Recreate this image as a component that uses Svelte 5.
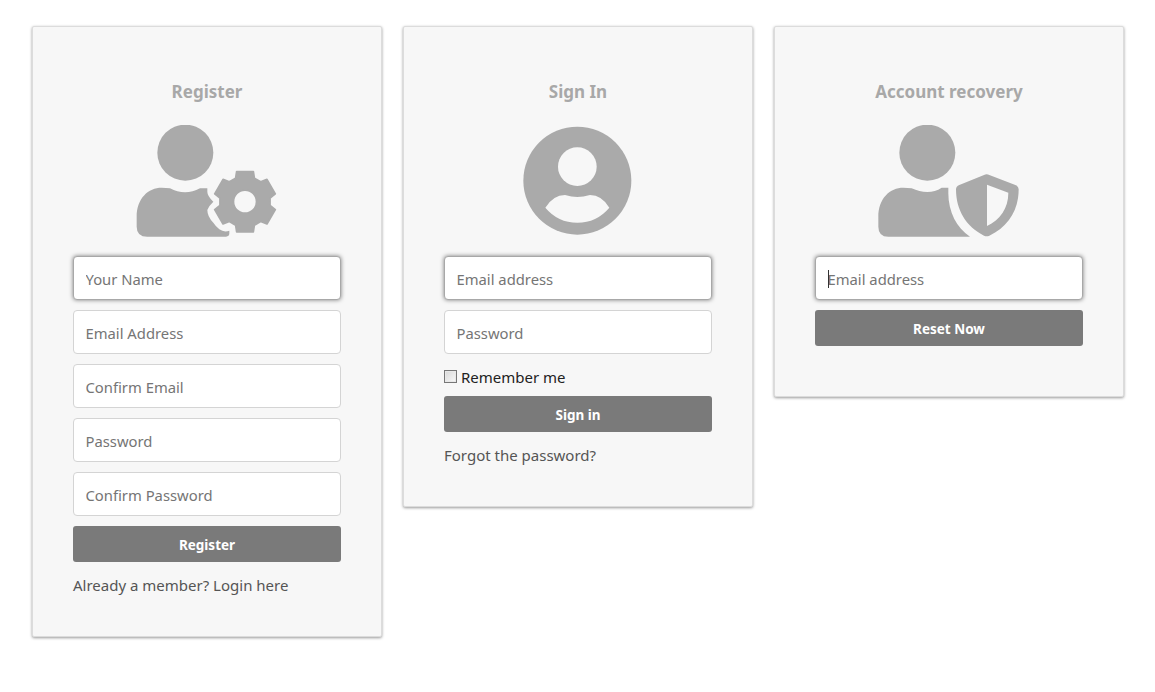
<script>
  const gear = (() => {
    const cx = 375, cy = 395, rOut = 94, rIn = 76;
    let d = '';
    for (let i = 0; i < 6; i++) {
      const a = (-90 + i * 60) * Math.PI / 180;
      const pt = (r, off) => `${(cx + r * Math.cos(a + off)).toFixed(1)} ${(cy + r * Math.sin(a + off)).toFixed(1)}`;
      d += `${i ? 'L' : 'M'}${pt(rIn, -0.38)} L${pt(rOut, -0.27)} L${pt(rOut, 0.27)} L${pt(rIn, 0.38)} `;
    }
    return d + 'Z M340.5 395 a34.5 34.5 0 1 0 69 0 a34.5 34.5 0 1 0 -69 0 Z';
  })();
</script>

<div class="page">
  <section class="card">
    <h2>Register</h2>
    <svg class="icon" viewBox="-9 165 540 336" role="img" aria-label="Register">
      <circle cx="196" cy="248" r="84" />
      <path d="M82 500 H318 Q328 500 328 490 V482 Q312 488 298 478 Q288 470 280 458 Q262 440 262 420 Q266 408 280 395 Q262 378 262 365 V355 H240 Q218 367 195 367 Q172 367 150 355 Q138 353 125 353 C85 353 50 385 50 440 V470 Q50 500 82 500 Z" />
      <path class="gear" fill-rule="evenodd" d={gear} />
    </svg>
    <form class="form">
      <input class="focused" placeholder="Your Name" />
      <input placeholder="Email Address" />
      <input placeholder="Confirm Email" />
      <input placeholder="Password" />
      <input placeholder="Confirm Password" />
      <button type="button">Register</button>
    </form>
    <a href="#login">Already a member? Login here</a>
  </section>

  <section class="card">
    <h2>Sign In</h2>
    <svg class="icon" viewBox="-36 165 540 336" role="img" aria-label="Sign In">
      <circle cx="232" cy="332" r="162" />
      <circle class="cut" cx="232" cy="290" r="58" />
      <path class="cut" d="M136 413 Q160 375 195 375 Q215 381 232 381 Q250 381 270 375 Q305 375 328 413 Q290 458 232 458 Q174 458 136 413 Z" />
    </svg>
    <form class="form">
      <input class="focused" placeholder="Email address" />
      <input placeholder="Password" />
      <label class="remember"><input class="check" type="checkbox" /><span>Remember me</span></label>
      <button type="button">Sign in</button>
    </form>
    <a href="#forgot">Forgot the password?</a>
  </section>

  <section class="card">
    <h2>Account recovery</h2>
    <svg class="icon" viewBox="-3 165 540 336" role="img" aria-label="Account recovery">
      <circle cx="202" cy="248" r="84" />
      <path d="M85 500 H330 C290 475 265 425 265 370 V353 H245 Q225 366 202 366 Q178 366 155 355 Q142 353 130 353 C90 353 55 385 55 440 V470 Q55 500 85 500 Z" />
      <path fill-rule="evenodd" d="M372 315 Q380 311 388 315 L466 345 Q476 349 476 358 C476 420 445 470 388 497 Q380 501 372 497 C318 470 288 420 288 358 Q288 349 298 345 Z M381 344 V468 C420 450 445 415 445 368 Z" />
    </svg>
    <form class="form last">
      <div class="field">
        <input class="focused" placeholder="Email address" />
        <span class="caret"></span>
      </div>
      <button type="button">Reset Now</button>
    </form>
  </section>
</div>

<style>
  :global(body) {
    margin: 0;
    background: #fff;
    font-family: "Noto Sans", "Open Sans", sans-serif;
  }
  .page {
    display: flex;
    align-items: flex-start;
    gap: 21px;
    padding: 26px 31px 55px 32px;
  }
  .card {
    box-sizing: border-box;
    width: 350px;
    padding: 50px 40px 41px;
    background: #f7f7f7;
    border: 1px solid #dcdcdc;
    border-radius: 2px;
    box-shadow: 0 1px 3px rgba(0, 0, 0, 0.4);
  }
  h2 {
    margin: 0;
    height: 28px;
    line-height: 29px;
    text-align: center;
    font-size: 17px;
    font-weight: 700;
    color: #a8a8a8;
  }
  .icon {
    display: block;
    width: 180px;
    height: 112px;
    margin: 20px auto 19px;
    fill: #aaa;
  }
  .gear {
    stroke: #aaa;
    stroke-width: 5;
    stroke-linejoin: round;
  }
  .cut {
    fill: #f7f7f7;
  }
  .form {
    display: flex;
    flex-direction: column;
    gap: 10px;
  }
  .form.last {
    padding-bottom: 9px;
  }
  .field {
    position: relative;
    display: flex;
  }
  input:not(.check) {
    box-sizing: border-box;
    width: 100%;
    height: 44px;
    padding: 2px 11.5px 0;
    background: #fff;
    border: 1px solid #d4d4d4;
    border-radius: 4px;
    font: inherit;
    font-size: 14.8px;
    color: #333;
    outline: none;
  }
  input::placeholder {
    color: #757575;
    opacity: 1;
  }
  input.focused {
    border-color: #a8a8a8;
    box-shadow: 0 0 4px rgba(0, 0, 0, 0.5);
  }
  .caret {
    position: absolute;
    left: 13px;
    top: 14px;
    width: 1px;
    height: 18px;
    background: #333;
  }
  button {
    height: 36px;
    padding-top: 2px;
    background: #7a7a7a;
    border: 0;
    border-radius: 3px;
    font: inherit;
    font-size: 13.5px;
    font-weight: 700;
    color: #fff;
  }
  .remember {
    box-sizing: border-box;
    display: flex;
    align-items: center;
    gap: 4px;
    height: 22px;
    padding-top: 3px;
    font-size: 15px;
    color: #222;
  }
  .check {
    appearance: none;
    box-sizing: border-box;
    width: 13px;
    height: 13px;
    margin: 0;
    border: 1px solid #777;
    background: linear-gradient(135deg, #d8d8d8, #f8f8f8);
    box-shadow: inset 0 0 0 1px #e8e8e8;
  }
  a {
    display: block;
    margin-top: 13px;
    line-height: 20px;
    font-size: 15px;
    color: #555;
    text-decoration: none;
  }
</style>
